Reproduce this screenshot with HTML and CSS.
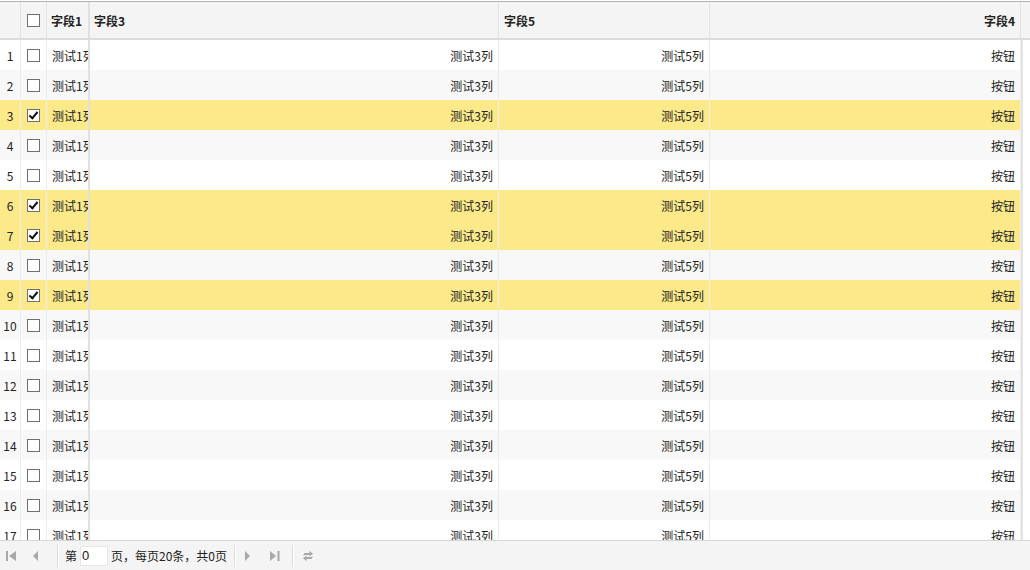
FILE: index.html
```html
<!DOCTYPE html>
<html>
<head>
<meta charset="utf-8">
<link rel="stylesheet" href="styles.css">
</head>
<body>
<div class="grid">
  <div class="head">
    <div class="c rn"></div>
    <div class="c ck"><span class="box"></span></div>
    <div class="c f1 hl">字段1</div>
    <div class="divider"></div>
    <div class="c f3 hl">字段3</div>
    <div class="c f5 hl">字段5</div>
    <div class="c f4 hr">字段4</div>
    <div class="c sb"></div>
  </div>
  <div class="bodywrap">
    <div class="rows" id="rows"></div>
    <div class="vscroll"></div>
  </div>
  <div class="pager">
    <span class="ic first"><svg width="12" height="12" viewBox="0 0 12 12"><rect x="1" y="1" width="2" height="10" fill="#a8a8a8"/><path d="M11 1 L4 6 L11 11 Z" fill="#a8a8a8"/></svg></span>
    <span class="ic prev"><svg width="12" height="12" viewBox="0 0 12 12"><path d="M8 1 L3 6 L8 11 Z" fill="#a8a8a8"/></svg></span>
    <span class="sep s1"></span>
    <span class="txt">第</span><span class="inp">0</span><span class="txt">页，每页20条，共0页</span>
    <span class="sep s2"></span>
    <span class="ic next"><svg width="12" height="12" viewBox="0 0 12 12"><path d="M3 1 L8 6 L3 11 Z" fill="#a8a8a8"/></svg></span>
    <span class="ic last"><svg width="12" height="12" viewBox="0 0 12 12"><path d="M1 1 L7 6 L1 11 Z" fill="#a8a8a8"/><rect x="8.5" y="1" width="2" height="10" fill="#a8a8a8"/></svg></span>
    <span class="sep s3"></span>
    <span class="ic refresh"><svg width="12" height="12" viewBox="0 0 12 12"><path d="M1 5.5 L2.5 3 L7.5 3 L7.5 1 L11 3.8 L7.5 6.6 L7.5 5 L3 5 Z" fill="#a8a8a8"/><path d="M11 6.5 L9.5 9 L4.5 9 L4.5 11 L1 8.2 L4.5 5.4 L4.5 7 L9 7 Z" fill="#a8a8a8"/></svg></span>
  </div>
</div>
<script>
(function(){
  var sel = {3:1,6:1,7:1,9:1};
  var h = '';
  for (var i = 1; i <= 17; i++) {
    var cls = 'row' + (i % 2 === 0 ? ' alt' : '') + (sel[i] ? ' sel' : '');
    h += '<div class="' + cls + '">' +
      '<div class="c rn">' + i + '</div>' +
      '<div class="c ck"><span class="box' + (sel[i] ? ' on' : '') + '"></span></div>' +
      '<div class="c f1 bl"><span class="clip">测试1列</span></div>' +
      '<div class="divider"></div>' +
      '<div class="c f3 br">测试3列</div>' +
      '<div class="c f5 br">测试5列</div>' +
      '<div class="c f4 br">按钮</div>' +
      '</div>';
  }
  document.getElementById('rows').innerHTML = h;
})();
</script>
</body>
</html>
```
FILE: styles.css
```css
html, body { margin: 0; padding: 0; background: #fff; }
body {
  font-family: "Noto Sans CJK SC", "Noto Sans", sans-serif;
  font-size: 12px;
  color: #222;
  width: 1030px;
  height: 570px;
  overflow: hidden;
}
.grid {
  width: 1030px;
  height: 570px;
  padding-top: 1px;
  box-sizing: border-box;
  display: flex;
  flex-direction: column;
}
.head {
  display: flex;
  height: 36px;
  border-top: 1px solid #b4b4b4;
  border-bottom: 2px solid #dcdcdc;
  background: #f4f4f4;
  flex: none;
}
.c {
  box-sizing: border-box;
  display: flex;
  align-items: center;
  white-space: nowrap;
  overflow: hidden;
  border-right: 1px solid #ececec;
  flex: none;
}
.head .c { border-right-color: #e4e4e4; }
.rn { width: 21px; justify-content: center; }
.ck { width: 26px; justify-content: center; }
.f1 { width: 41px; padding-left: 5px; border-right: none; }
.divider { width: 2px; background: #e0e0e0; flex: none; }
.f3 { width: 409px; }
.f5 { width: 211px; }
.f4 { width: 311px; }
.sb { width: 9px; border-right: none; }
.hl { font-weight: bold; padding-left: 4px; }
.f5.hl { padding-left: 5px; }
.hr { font-weight: bold; justify-content: flex-end; padding-right: 5px; }
.br { justify-content: flex-end; padding-right: 5px; }
.clip { display: block; overflow: hidden; }
.box {
  width: 11px;
  height: 11px;
  border: 1px solid #707070;
  background: #fff;
  position: relative;
  display: block;
}
.box.on::after {
  content: "";
  position: absolute;
  left: 3px;
  top: 0px;
  width: 3px;
  height: 7px;
  border: solid #111;
  border-width: 0 2px 2px 0;
  transform: rotate(40deg);
}
.bodywrap {
  display: flex;
  height: 500px;
  overflow: hidden;
  flex: none;
}
.rows { width: 1021px; flex: none; }
.vscroll {
  width: 9px;
  flex: none;
  border-left: 2px solid #e4e4e4;
  box-sizing: border-box;
  background: #fff;
}
.row {
  display: flex;
  height: 30px;
  background: #fff;
}
.row.alt { background: #f8f8f8; }
.row.sel { background: #fbe98a; }
.pager {
  flex: none;
  height: 30px;
  box-sizing: border-box;
  border-top: 1px solid #d6d6d6;
  background: #f4f4f4;
  display: flex;
  align-items: center;
  padding-left: 5px;
  color: #222;
}
.pager > span { flex: none; }
.ic { width: 12px; height: 12px; display: flex; }
.first { margin-right: 13px; }
.prev { margin-right: 10px; }
.next { margin-right: 15px; }
.last { margin-right: 11px; }
.sep { width: 1px; height: 22px; background: #dcdcdc; border-right: 1px solid #fff; }
.s1 { margin: 0 6px 0 5px; }
.s2 { margin: 0 6px 0 7px; }
.s3 { margin: 0 8px 0 0; }
.txt { line-height: 20px; white-space: nowrap; }
.inp {
  width: 28px;
  height: 20px;
  box-sizing: border-box;
  background: #fff;
  border: 1px solid #e6e6e6;
  line-height: 18px;
  padding-left: 1px;
  margin: 0 3px 0 3px;
  font-family: "Liberation Sans", sans-serif;
  font-size: 13px;
}
```
